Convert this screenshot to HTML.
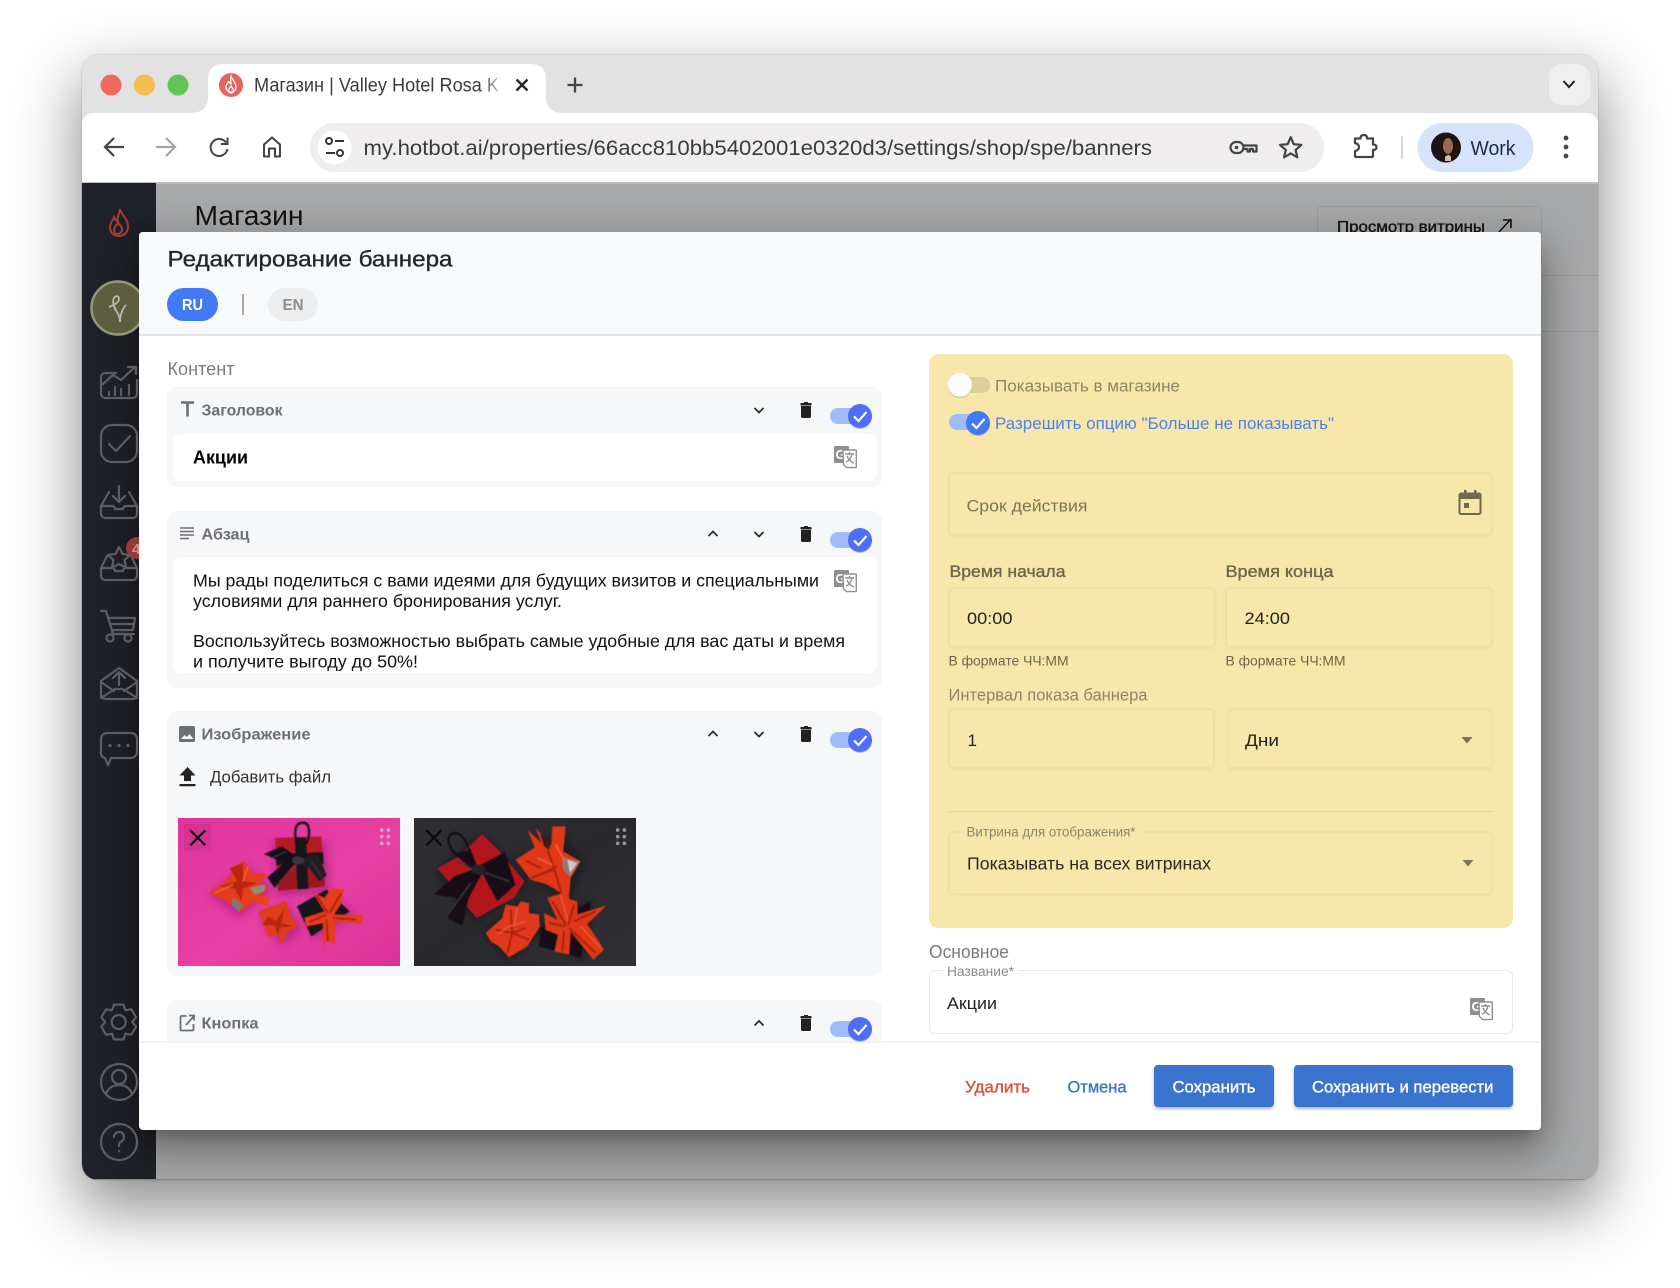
<!DOCTYPE html>
<html lang="ru"><head><meta charset="utf-8"><title>Магазин</title>
<style>
html,body{margin:0;padding:0;background:#fff;width:1680px;height:1288px;overflow:hidden}
body{position:relative;font-family:"Liberation Sans",sans-serif}
.a{position:absolute;box-sizing:border-box}
svg{position:absolute;left:0;top:0;overflow:visible}
svg text{font-family:"Liberation Sans",sans-serif}
.m{stroke-width:.35px;paint-order:stroke}
.in{border:2px solid #efe1a3;border-radius:6px;box-shadow:0 1px 2px rgba(120,100,30,.06)}
</style></head><body>

<!-- window -->
<div class="a" style="left:82px;top:55px;width:1516px;height:1125px;border-radius:16px;box-shadow:0 26px 62px 4px rgba(0,0,0,.44),0 0 1px 1px rgba(0,0,0,.08)"></div>
<div class="a" id="w" style="left:82px;top:55px;width:1516px;height:1125px;border-radius:16px;overflow:hidden;background:#e2e2e2">
  <div class="a" style="left:0;top:58px;width:1516px;height:69px;background:#fff;border-radius:11px 11px 0 0"></div>
  <div class="a" style="left:0;top:127px;width:1516px;height:998px;background:#a8a9aa;border-top:2px solid #bdbdbd"></div>
  <div class="a" style="left:0;top:128px;width:74px;height:997px;background:#202229"></div>
  <div class="a" style="left:74px;top:220px;width:1442px;height:1px;background:#9a9b9c"></div>
  <div class="a" style="left:74px;top:276px;width:1442px;height:1px;background:#9a9b9c"></div>
  <div class="a" style="left:0;top:1124px;width:1516px;height:1px;background:#8a8b8c"></div>
  <div class="a" style="left:1235px;top:151px;width:225px;height:60px;border:1px solid #9c9d9e;border-radius:4px"></div>
  <div class="a" style="left:57px;top:177px;width:1402px;height:898px;border-radius:4px;box-shadow:0 11px 15px -7px rgba(0,0,0,.25),0 24px 38px 3px rgba(0,0,0,.2),0 9px 46px 8px rgba(0,0,0,.17)"></div>
</div>

<!-- chrome + sidebar svg -->
<svg width="1680" height="1288" viewBox="0 0 1680 1288" fill="none">
  <circle cx="111" cy="85" r="10.5" fill="#ee6a5f"/><circle cx="144.500" cy="85" r="10.500" fill="#f5bd4f"/><circle cx="178" cy="85" r="10.500" fill="#61c454"/>
  <path d="M190 113Q208 113 208 97V80Q208 64 224 64H530Q546 64 546 80V97Q546 113 564 113Z" fill="#fff"/>
  <circle cx="231" cy="85" r="12" fill="#e8635a"/>
  <path d="M231 76c1 4 5 6 5 11a5 5 0 0 1-10 0c0-3 2-4 3-6 0 2 1 3 2 3 0-3-1-5 0-8zM231 93c-2 0-3-2-2-4l2-3 2 3c1 2 0 4-2 4z" stroke="#fff" stroke-width="1.300"/>
  <text x="254" y="91.500" font-size="19" fill="#3a3a3a" textLength="245" lengthAdjust="spacingAndGlyphs">Магазин | Valley Hotel Rosa K</text>
  <defs><linearGradient id="fd"><stop offset="0" stop-color="#fff" stop-opacity="0"/><stop offset="1" stop-color="#fff"/></linearGradient></defs>
  <rect x="482" y="70" width="24" height="30" fill="url(#fd)"/>
  <path d="M516.500 79.500l11 11M527.500 79.500l-11 11" stroke="#222" stroke-width="2.300"/>
  <path d="M575 77.500v15M567.500 85h15" stroke="#444" stroke-width="2.300"/>
  <rect x="1549" y="64" width="41" height="41" rx="13" fill="#efefef"/>
  <path d="M1563.500 81l5.500 6 5.500-6" stroke="#222" stroke-width="2"/>

  <!-- nav -->
  <path d="M124 147H106M114 138l-9 9 9 9" stroke="#444" stroke-width="2.200"/>
  <path d="M156 147H174M166 138l9 9-9 9" stroke="#a4a4a4" stroke-width="2.200"/>
  <path d="M226 142.500a8.500 8.500 0 1 0 1.500 6.500M227.500 137.500v6.500h-6.500" stroke="#444" stroke-width="2"/>
  <path d="M264 156.500v-12l8-7 8 7v12h-5v-8h-6v8z" stroke="#444" stroke-width="2" stroke-linejoin="round"/>
  <rect x="310" y="123" width="1014" height="49" rx="24.500" fill="#efedee"/>
  <circle cx="334.500" cy="147.500" r="17" fill="#fff"/>
  <g stroke="#333" stroke-width="2"><circle cx="329" cy="141" r="3"/><path d="M335 141h9M326 153h9"/><circle cx="340" cy="153" r="3"/></g>
  <text x="363.500" y="155" font-size="21.500" fill="#3b3b3b" textLength="788.500" lengthAdjust="spacingAndGlyphs">my.hotbot.ai/properties/66acc810bb5402001e0320d3/settings/shop/spe/banners</text>
  <g stroke="#444" stroke-width="2.200" stroke-linejoin="round"><rect x="1230.500" y="142" width="13" height="11" rx="5.500"/><path d="M1243 145.500h13.500v6h-3.500v-2.500h-3v2.500h-2.500v-2.500h-4"/></g><circle cx="1236.500" cy="147.500" r="1.800" fill="#444"/>
  <path d="M1290.700 137.200l3 7 7.700.7-5.800 5 1.700 7.400-6.600-3.900-6.600 3.900 1.700-7.400-5.800-5 7.700-.7z" stroke="#444" stroke-width="2.200" stroke-linejoin="round"/>
  <path d="M1355 138.500h5.500q0-3.500 3.300-3.500t3.300 3.500H1373v6q3.500 0 3.500 2.700t-3.500 2.700v6.100a1 1 0 0 1-1 1h-16a1 1 0 0 1-1-1v-5q4-1 4-4t-4-4z" stroke="#444" stroke-width="2.200" stroke-linejoin="round"/>
  <rect x="1401" y="136" width="2" height="23" fill="#d8d8d8"/>
  <rect x="1417.500" y="123" width="116" height="49" rx="24.500" fill="#d6e3fa"/>
  <circle cx="1446" cy="147.500" r="15" fill="#1c1412"/><ellipse cx="1448" cy="146" rx="5" ry="8" fill="#9a6c58"/><path d="M1445 157q4-4 6 0v4h-6z" fill="#d9b7a2"/>
  <text x="1470.500" y="155" font-size="20.500" fill="#1d2a4a" textLength="45" lengthAdjust="spacingAndGlyphs">Work</text>
  <g fill="#444"><circle cx="1566" cy="138" r="2.400"/><circle cx="1566" cy="147" r="2.400"/><circle cx="1566" cy="156" r="2.400"/></g>

  <!-- page behind -->
  <text x="194.500" y="225" font-size="28" fill="#111" textLength="109" lengthAdjust="spacingAndGlyphs">Магазин</text>
  <text x="1337" y="232" font-size="16" fill="#111" class="m" stroke="#111" textLength="148" lengthAdjust="spacingAndGlyphs">Просмотр витрины</text>
  <path d="M1499 232l12-13M1503 220h8v8" stroke="#111" stroke-width="1.600"/>

  <!-- sidebar -->
  <g stroke="#a63a34" stroke-width="2"><path d="M120 209c1 6 8 9 8 18 0 5-4 9-9 9-6 0-9-4-9-9 0-4 3-7 4-10 1 2 1 3 3 4 1-4 2-8 3-12z"/><path d="M118 222c1 3 5 5 4 9-1 2-3 3-4 3-3 0-4-2-4-4 0-3 3-5 4-8z"/></g>
  <circle cx="118" cy="308" r="26.500" fill="#5c5e3e" stroke="#95967e" stroke-width="2.500"/>
  <path d="M114 298c-2 3 0 10 3 14 2 3 3 7 3 10 0-6 2-13 6-17M114 298c2-3 5-2 5 1s-5 6-10 8M111 322h.1" stroke="#b9baa9" stroke-width="1.800"/>
  <circle cx="137" cy="548" r="11" fill="#973836"/>
  <text x="132" y="554" font-size="15" font-weight="700" fill="#c9908c">4</text>
  <g stroke="#5c5d62" stroke-width="2.200" stroke-linecap="round" stroke-linejoin="round">
    <path d="M116 373h-11a4 4 0 0 0-4 4v17a4 4 0 0 0 4 4h28a4 4 0 0 0 4-4v-14M103 384l10-9 8 5 14-13M128 367h8v7M109 395v-3M115 395v-8M121 395v-6M129 395v-10"/>
    <rect x="101" y="425" width="36" height="37" rx="11"/><path d="M109 444l7 7 14-15"/>
    <path d="M119 486v16M113 496l6 6 6-6M109 492l-8 14v8a4 4 0 0 0 4 4h28a4 4 0 0 0 4-4v-8l-8-14M101 506h11a3 3 0 0 1 3 3h8a3 3 0 0 1 3-3h11"/>
    <path d="M119 547l3.500 7 7.500 1-5.500 5 1.500 7.500-7-3.500-7 3.500 1.500-7.500-5.500-5 7.500-1zM107 556l-6 12v8a4 4 0 0 0 4 4h28a4 4 0 0 0 4-4v-8l-6-12M101 568h11a3 3 0 0 1 3 3h8a3 3 0 0 1 3-3h11"/>
    <path d="M101 611h5l7 23h21M109 618h26l-2 12h-21M111 624h23"/><circle cx="110" cy="638" r="3.500"/><circle cx="128" cy="638" r="3.500"/>
    <path d="M101 684v11a4 4 0 0 0 4 4h28a4 4 0 0 0 4-4v-14l-18-13-18 13zM101 682l13 9M137 682l-13 9M101 698l14-9h8l14 9M119 685v-12M113 678l6-6 6 6"/>
    <path d="M107 733h24a6 6 0 0 1 6 6v13a6 6 0 0 1-6 6h-20l-3 7-3-7a5 5 0 0 1-4-6v-13a6 6 0 0 1 6-6z"/>
    <path d="M110 745.500h.1M119 745.500h.1M128 745.500h.1" stroke-width="3.200"/>
    <path transform="translate(118.700 1022)" d="M-4.700-17.400L4.700-17.400 6.750-11.700 12.700-12.700 17.400-4.700 13.500 0 17.400 4.700 12.700 12.700 6.750 11.700 4.700 17.400-4.700 17.400-6.750 11.700-12.700 12.700-17.400 4.700-13.500 0-17.400-4.700-12.700-12.700-6.750-11.700Z"/>
    <circle cx="118.700" cy="1022" r="7"/>
    <circle cx="119" cy="1082" r="18"/><circle cx="119" cy="1077" r="7"/><path d="M106 1094c2-6 7-9 13-9s11 3 13 9"/>
    <circle cx="119" cy="1142" r="18"/><path d="M114 1137a5 5 0 1 1 8 4c-2 1-3 2-3 5"/><path d="M119 1151v.1"/>
  </g>
</svg>

<!-- modal -->
<div class="a" style="left:139px;top:232px;width:1402px;height:898px;border-radius:4px;background:#fff;overflow:hidden">
  <div class="a" style="left:0;top:0;width:1402px;height:104px;background:#f8f9fb;border-bottom:2px solid #e4e5e6"></div>
</div>
<div class="a" style="left:167px;top:288px;width:51px;height:33px;border-radius:17px;background:#4279f4"></div>
<div class="a" style="left:242px;top:294px;width:1.500px;height:21px;background:#a8a8a8"></div>
<div class="a" style="left:268px;top:288px;width:50px;height:33px;border-radius:17px;background:#ecedee"></div>

<!-- cards -->
<div class="a" style="left:167px;top:387px;width:715px;height:100px;border-radius:10px;background:#f6f7f9"></div>
<div class="a" style="left:173px;top:434px;width:704px;height:47px;border-radius:8px;background:#fff"></div>
<div class="a" style="left:167px;top:511px;width:715px;height:177px;border-radius:10px;background:#f6f7f9"></div>
<div class="a" style="left:173px;top:557px;width:704px;height:116px;border-radius:8px;background:#fff"></div>
<div class="a" style="left:167px;top:711px;width:715px;height:265px;border-radius:10px;background:#f6f7f9"></div>
<div class="a" style="left:167px;top:1000px;width:715px;height:42px;border-radius:10px 10px 0 0;background:#f6f7f9"></div>

<!-- yellow panel -->
<div class="a" style="left:929px;top:354px;width:584px;height:574px;border-radius:10px;background:#f7e7ab"></div>
<div class="a in" style="left:948px;top:472px;width:545px;height:64px"></div>
<div class="a in" style="left:948px;top:587px;width:268px;height:61px"></div>
<div class="a in" style="left:1225px;top:587px;width:268px;height:61px"></div>
<div class="a in" style="left:948px;top:708px;width:267px;height:61px"></div>
<div class="a in" style="left:1227px;top:708px;width:266px;height:61px"></div>
<div class="a" style="left:948px;top:811px;width:545px;height:1px;background:#e6d79d"></div>
<div class="a in" style="left:948px;top:831px;width:545px;height:64px"></div>
<div class="a" style="left:961px;top:829px;width:180px;height:5px;background:#f7e7ab"></div>
<div class="a" style="left:929px;top:970px;width:584px;height:64px;border:1.500px solid #e8e8e8;border-radius:6px;background:#fff"></div>
<div class="a" style="left:943px;top:968px;width:75px;height:5px;background:#fff"></div>
<div class="a" style="left:139px;top:1041px;width:1402px;height:2px;background:#f3f3f3"></div>

<svg width="1680" height="1288" viewBox="0 0 1680 1288" fill="none">
  <defs>
    <linearGradient id="pk" x1="0" y1="0" x2="1" y2="1"><stop offset="0" stop-color="#e2339e"/><stop offset=".55" stop-color="#e540a3"/><stop offset="1" stop-color="#dc3196"/></linearGradient>
    <linearGradient id="dk" x1="0" y1="0" x2="1" y2="1"><stop offset="0" stop-color="#2f2f33"/><stop offset=".5" stop-color="#29292d"/><stop offset="1" stop-color="#303035"/></linearGradient>
    <filter id="b1" x="-10%" y="-10%" width="120%" height="120%"><feGaussianBlur stdDeviation="1.800"/></filter>
    <filter id="b2" x="-30%" y="-30%" width="160%" height="160%"><feGaussianBlur stdDeviation="12"/></filter>
    <clipPath id="ic"><rect width="666" height="444"/></clipPath>
    <symbol id="on" viewBox="0 0 44 26" width="44" height="26" overflow="visible">
      <rect x="0" y="5" width="40" height="16" rx="8" fill="#9fbcf9"/><circle cx="30" cy="13" r="12" fill="#000" opacity=".2" transform="translate(0 1)"/><circle cx="30" cy="13" r="12" fill="#4f6ef5"/><path d="M24 13.500l4.500 4.500 8-9" stroke="#fff" stroke-width="2.200"/>
    </symbol>
    <symbol id="tr" viewBox="0 0 14 16" width="14" height="16"><path d="M1.500 1h11v2.500a0 0 0 0 1 0 0H1.500z" fill="#222"/><path d="M5 0h4v1.500H5z" fill="#222"/><path d="M2 4h10v10.500a1.500 1.500 0 0 1-1.500 1.500h-7A1.500 1.500 0 0 1 2 14.500z" fill="#222"/></symbol>
  </defs>

  <text x="167.500" y="266.500" font-size="22" fill="#23262b" stroke="#23262b" class="m" textLength="285" lengthAdjust="spacingAndGlyphs">Редактирование баннера</text>
  <text x="182" y="310" font-size="15.500" font-weight="700" fill="#fff" textLength="21" lengthAdjust="spacingAndGlyphs">RU</text>
  <text x="282.500" y="310" font-size="15.500" font-weight="700" fill="#8d8d8d" textLength="21" lengthAdjust="spacingAndGlyphs">EN</text>
  <text x="167.500" y="375" font-size="18" fill="#7b7b7b" textLength="67" lengthAdjust="spacingAndGlyphs">Контент</text>

  <!-- card labels -->
  <g font-weight="700" font-size="16" fill="#6e6f71">
    <text x="201.500" y="415.500" textLength="81" lengthAdjust="spacingAndGlyphs">Заголовок</text>
    <text x="201.500" y="539.500" textLength="48" lengthAdjust="spacingAndGlyphs">Абзац</text>
    <text x="201.500" y="739.500" textLength="109" lengthAdjust="spacingAndGlyphs">Изображение</text>
    <text x="201.500" y="1028.500" textLength="57" lengthAdjust="spacingAndGlyphs">Кнопка</text>
  </g>
  <path d="M181 402.500h13M187.500 402.500v14" stroke="#6e6f71" stroke-width="2.600"/>
  <path d="M180 528h14M180 531.500h14M180 535h14M180 538.500h9" stroke="#6e6f71" stroke-width="1.500"/>
  <rect x="179" y="726" width="16" height="16" rx="1.800" fill="#6e6f71"/><path d="M181 739l3.500-4 2.500 2 2.500-3 4 5z" fill="#f6f7f9"/>
  <path d="M181 1016h5.500M193.500 1024v5.500a1 1 0 0 1-1 1h-11a1 1 0 0 1-1-1v-12.500a1 1 0 0 1 1-1M186 1025l8-9M189 1015.500h5v5" stroke="#6e6f71" stroke-width="1.800"/>

  <text x="193" y="463.500" font-size="18" font-weight="700" fill="#000" textLength="55" lengthAdjust="spacingAndGlyphs">Акции</text>
  <g font-size="17.500" fill="#111">
    <text x="193" y="586.500" textLength="626" lengthAdjust="spacingAndGlyphs">Мы рады поделиться с вами идеями для будущих визитов и специальными</text>
    <text x="193" y="607" textLength="369" lengthAdjust="spacingAndGlyphs">условиями для раннего бронирования услуг.</text>
    <text x="193" y="647" textLength="652" lengthAdjust="spacingAndGlyphs">Воспользуйтесь возможностью выбрать самые удобные для вас даты и время</text>
    <text x="193" y="667.500" textLength="225" lengthAdjust="spacingAndGlyphs">и получите выгоду до 50%!</text>
  </g>

  <!-- chevrons -->
  <g stroke="#2c2c2c" stroke-width="1.800">
    <path d="M754.500 408l4.500 4.500 4.500-4.500M754.500 532l4.500 4.500 4.500-4.500M754.500 732l4.500 4.500 4.500-4.500"/>
    <path d="M708.500 536l4.500-4.500 4.500 4.500M708.500 736l4.500-4.500 4.500 4.500M754.500 1025.500l4.500-4.500 4.500 4.500"/>
  </g>
  <use href="#tr" x="799" y="402"/><use href="#tr" x="799" y="526"/><use href="#tr" x="799" y="726"/><use href="#tr" x="799" y="1015"/>
  <use href="#on" x="830" y="403"/><use href="#on" x="830" y="527"/><use href="#on" x="830" y="727"/><use href="#on" x="830" y="1016"/>

  <!-- translate icons -->
  <g transform="translate(-1 0)"><rect x="835" y="446" width="15" height="17" rx="1" fill="#8f8f8f"/><text x="836.500" y="459" font-size="13" font-weight="700" fill="#fff">G</text><path d="M844 450h12.500a.8.800 0 0 1 .8.800v16a.8.800 0 0 1-.8.800h-9l-3-3z" fill="#fff" stroke="#8f8f8f" stroke-width="1.400"/><path d="M846 454h9M850.500 452v2M853 454c-1 4-3 7-6 8M848 456c1 3 4 6 7 7" stroke="#8f8f8f" stroke-width="1.400"/></g>
  <g transform="translate(-1 0)"><rect x="835" y="570" width="15" height="17" rx="1" fill="#8f8f8f"/><text x="836.500" y="583" font-size="13" font-weight="700" fill="#fff">G</text><path d="M844 574h12.500a.8.800 0 0 1 .8.800v16a.8.800 0 0 1-.8.800h-9l-3-3z" fill="#fff" stroke="#8f8f8f" stroke-width="1.400"/><path d="M846 578h9M850.500 576v2M853 578c-1 4-3 7-6 8M848 580c1 3 4 6 7 7" stroke="#8f8f8f" stroke-width="1.400"/></g>
  <g transform="translate(-1 0)"><rect x="1471" y="998" width="15" height="17" rx="1" fill="#8f8f8f"/><text x="1472.500" y="1011" font-size="13" font-weight="700" fill="#fff">G</text><path d="M1480 1002h12.500a.8.800 0 0 1 .8.800v16a.8.800 0 0 1-.8.800h-9l-3-3z" fill="#fff" stroke="#8f8f8f" stroke-width="1.400"/><path d="M1482 1006h9M1486.500 1004v2M1489 1006c-1 4-3 7-6 8M1484 1008c1 3 4 6 7 7" stroke="#8f8f8f" stroke-width="1.400"/></g>

  <!-- upload -->
  <path d="M187.500 767l-8 8.500h4.500v5.500h7v-5.500h4.500zM179.500 784h16v2.200h-16z" fill="#222"/>
  <text x="210" y="782.500" font-size="17" fill="#333" textLength="121" lengthAdjust="spacingAndGlyphs">Добавить файл</text>

  <!-- image 1 (drawn at 3x local coords) -->
  <g transform="translate(178 818) scale(.33333)" clip-path="url(#ic)">
    <rect width="666" height="444" fill="url(#pk)"/>
    <g fill="#a3157a" opacity=".55" filter="url(#b2)">
      <path d="M280 70L445 70 455 225 300 235Z"/>
      <path d="M95 235L200 140 285 215 185 300Z"/>
      <path d="M245 290L335 260 370 340 310 385Z"/>
      <path d="M365 275L450 225 530 290 405 365Z"/>
    </g>
    <g filter="url(#b1)" stroke-linejoin="round">
      <!-- red box + black bow -->
      <path d="M292 60L430 55 440 205 300 218Z" fill="#b01a22"/>
      <path d="M300 160L440 150 440 205 300 218Z" fill="#9c141c"/>
      <path d="M292 108L435 102 437 138 296 142Z" fill="#17131a"/>
      <path d="M350 58L384 58 392 212 358 214Z" fill="#17131a"/>
      <path d="M358 82C345 40 352 14 374 14 396 14 398 44 386 78" stroke="#15111a" stroke-width="7"/>
      <path d="M258 108L312 84 365 122 330 160 290 210 268 178 318 135Z" fill="#15111a"/>
      <path d="M372 118L420 110 446 172 424 190 392 150 368 138Z" fill="#211c25"/>
      <path d="M345 118C360 112 375 118 380 128 370 142 352 142 342 132Z" fill="#3a3640"/>
      <path d="M280 120L325 100M352 150L305 190M400 130L430 175" stroke="#3d3945" stroke-width="3"/>
      <!-- left orange gift -->
      <path d="M92 225L140 190 195 128 225 165 270 167 245 198 272 205 262 222 185 285 160 258 128 240Z" fill="#e33c1b"/>
      <path d="M165 240L196 262 182 280 162 262Z" fill="#7a7d72"/>
      <path d="M215 210L262 200 260 218 232 230Z" fill="#8b8d80"/>
      <path d="M195 225L275 238 270 266 218 248Z" fill="#e8431f"/>
      <path d="M155 150L178 190 125 205 170 212 190 250 195 210 240 195 195 190 195 135Z" fill="#b9270f"/>
      <path d="M110 225L165 200M210 145L195 190" stroke="#f4643b" stroke-width="4"/>
      <!-- small gift -->
      <path d="M240 280L325 248 337 290 360 325 333 338 310 380 300 350 270 358 258 318Z" fill="#e03a1c"/>
      <path d="M270 295L295 310 320 270 310 315 345 325 305 330 300 355 290 322 252 322Z" fill="#b8280f"/>
      <!-- black box + bow -->
      <path d="M357 265L445 215 515 280 400 355Z" fill="#16131a"/>
      <path d="M405 225L440 240 460 210 497 215 490 255 468 290 557 292 550 318 470 310 472 378 445 368 437 388 435 315 385 325 380 300 440 280Z" fill="#e33c1b"/>
      <path d="M415 232L450 285M490 225L455 285M465 300L535 305M445 305L450 370M395 312L445 290" stroke="#b0240e" stroke-width="6"/>
    </g>
    <rect x="18" y="18" width="82" height="82" fill="#000" opacity=".06"/>
    <path d="M37 37L82 82M82 37L37 82" stroke="#141216" stroke-width="7"/>
    <g fill="#dfa0ca"><circle cx="611" cy="36" r="5.500"/><circle cx="631" cy="36" r="5.500"/><circle cx="611" cy="56" r="5.500"/><circle cx="631" cy="56" r="5.500"/><circle cx="611" cy="76" r="5.500"/><circle cx="631" cy="76" r="5.500"/></g>
  </g>

  <!-- image 2 -->
  <g transform="translate(414 818) scale(.33333)" clip-path="url(#ic)">
    <rect width="666" height="444" fill="url(#dk)"/>
    <g fill="#111114" opacity=".6" filter="url(#b2)">
      <path d="M70 160L205 55 335 195 190 305Z"/><path d="M305 130L450 60 500 140 460 245Z"/><path d="M215 345L320 255 385 325 285 425Z"/><path d="M375 335L530 250 505 425Z"/>
    </g>
    <g filter="url(#b1)" stroke-linejoin="round">
      <!-- red/black gift -->
      <path d="M70 150L130 118 205 48 252 95 332 190 300 240 250 265 190 300 170 280 125 215Z" fill="#b2191f"/>
      <path d="M170 105C150 50 130 38 112 48 98 58 100 85 128 112" stroke="#111014" stroke-width="6.500"/>
      <path d="M120 108L170 92 190 145 272 102 305 200 282 222 250 250 225 205 205 165 165 240 145 322 100 300 130 240 60 230 120 175 175 155Z" fill="#121115"/>
      <path d="M105 285L170 195M200 160L285 190M130 130L180 155" stroke="#34333a" stroke-width="5"/>
      <path d="M180 140C200 135 218 148 215 165 200 178 178 170 172 155Z" fill="#25242a"/>
      <!-- top right orange -->
      <path d="M305 125L362 88 340 35 382 75 365 30 412 82 415 25 455 25 448 100 500 130 470 180 465 240 400 200 350 185Z" fill="#df3818"/>
      <path d="M378 48L415 65 405 95 390 85Z" fill="#3a1a1c"/>
      <path d="M445 118L497 130 470 175 448 155Z" fill="#8c7a78"/>
      <path d="M460 125L490 135 468 165Z" fill="#d9c4c0"/>
      <path d="M335 128L380 150M400 95L420 150 445 235M380 170L430 145M350 180L420 155" stroke="#a9230e" stroke-width="6"/>
      <path d="M425 80L450 125M370 120L415 140" stroke="#f4603a" stroke-width="5"/>
      <!-- bottom center orange -->
      <path d="M215 345L265 300 275 260 310 265 320 250 345 255 345 285 375 290 378 325 340 385 285 418 255 385 230 370Z" fill="#e0391a"/>
      <path d="M245 335L295 345 280 405M295 345L335 330M295 345L290 275M295 345L345 365" stroke="#ad240f" stroke-width="6"/>
      <path d="M250 350L285 325 335 310M310 270L300 325" stroke="#f2593a" stroke-width="4"/>
      <!-- bottom right -->
      <path d="M380 330L530 250 525 300 500 418 375 385Z" fill="#121115"/>
      <path d="M400 240L445 225 470 245 490 250 490 290 578 262 520 318 570 395 538 425 470 340 465 410 422 400 432 350 395 335 390 285 430 305Z" fill="#df3719"/>
      <path d="M415 250L455 320M480 260L462 322M465 330L545 405M450 340L445 400M405 315L455 325M480 310L545 280" stroke="#a6200d" stroke-width="6"/>
      <path d="M440 232L462 310M500 325L560 390" stroke="#f25a35" stroke-width="4"/>
    </g>
    <path d="M37 37L82 82M82 37L37 82" stroke="#0b0b0d" stroke-width="7"/>
    <g fill="#96969a"><circle cx="611" cy="36" r="5.500"/><circle cx="631" cy="36" r="5.500"/><circle cx="611" cy="56" r="5.500"/><circle cx="631" cy="56" r="5.500"/><circle cx="611" cy="76" r="5.500"/><circle cx="631" cy="76" r="5.500"/></g>
  </g>

  <!-- yellow panel contents -->
  <rect x="949" y="377" width="41" height="16" rx="8" fill="#dccf98"/>
  <circle cx="960" cy="386" r="12" fill="#000" opacity=".18"/><circle cx="960" cy="385" r="12" fill="#fbfbfb"/>
  <text x="995" y="391.500" font-size="17" fill="#8d8664" textLength="185" lengthAdjust="spacingAndGlyphs">Показывать в магазине</text>
  <rect x="949" y="414" width="41" height="16" rx="8" fill="#9fbcf9"/>
  <circle cx="978" cy="424" r="12" fill="#000" opacity=".2"/><circle cx="978" cy="423" r="12" fill="#4279f4"/><path d="M972 423.500l4.500 4.500 8-9" stroke="#fff" stroke-width="2.200"/>
  <text x="995" y="429" font-size="17" fill="#4b82ee" textLength="339" lengthAdjust="spacingAndGlyphs">Разрешить опцию "Больше не показывать"</text>
  <text x="966.500" y="511.500" font-size="17" fill="#7c7552" textLength="121" lengthAdjust="spacingAndGlyphs">Срок действия</text>
  <path d="M1461 493.500h18a1.500 1.500 0 0 1 1.500 1.500v17.500a1.500 1.500 0 0 1-1.500 1.500h-18a1.500 1.500 0 0 1-1.500-1.500V495a1.500 1.500 0 0 1 1.500-1.500z" stroke="#6f6a4c" stroke-width="2"/>
  <path d="M1460 493h20v6h-20zM1464 490h2.500v4H1464zM1474 490h2.500v4H1474zM1464 503h5v5h-5z" fill="#6f6a4c"/>
  <text x="949.500" y="577" font-size="17" fill="#6d664a" stroke="#6d664a" class="m" textLength="116" lengthAdjust="spacingAndGlyphs">Время начала</text>
  <text x="1225.500" y="577" font-size="17" fill="#6d664a" stroke="#6d664a" class="m" textLength="108" lengthAdjust="spacingAndGlyphs">Время конца</text>
  <text x="967" y="624" font-size="17" fill="#23221a" textLength="45.500" lengthAdjust="spacingAndGlyphs">00:00</text>
  <text x="1244.500" y="624" font-size="17" fill="#23221a" textLength="45.500" lengthAdjust="spacingAndGlyphs">24:00</text>
  <text x="948.500" y="665.500" font-size="13.500" fill="#6d664a" textLength="120" lengthAdjust="spacingAndGlyphs">В формате ЧЧ:ММ</text>
  <text x="1225.500" y="665.500" font-size="13.500" fill="#6d664a" textLength="120" lengthAdjust="spacingAndGlyphs">В формате ЧЧ:ММ</text>
  <text x="948.500" y="700.500" font-size="17" fill="#8d8664" textLength="199" lengthAdjust="spacingAndGlyphs">Интервал показа баннера</text>
  <text x="967.500" y="746" font-size="17" fill="#23221a">1</text>
  <text x="1245" y="746" font-size="17" fill="#23221a" textLength="34" lengthAdjust="spacingAndGlyphs">Дни</text>
  <path d="M1461.500 737h11l-5.500 6.500z" fill="#7c7552"/>
  <text x="966.500" y="836.500" font-size="13.500" fill="#8d8664" textLength="169" lengthAdjust="spacingAndGlyphs">Витрина для отображения*</text>
  <text x="967" y="869.500" font-size="17.500" fill="#2b2a1d" textLength="244" lengthAdjust="spacingAndGlyphs">Показывать на всех витринах</text>
  <path d="M1462.500 860h11l-5.500 6.500z" fill="#7c7552"/>

  <text x="929" y="958" font-size="18" fill="#7b7b7b" textLength="80" lengthAdjust="spacingAndGlyphs">Основное</text>
  <text x="947" y="976" font-size="13.500" fill="#8a8a8a" textLength="67" lengthAdjust="spacingAndGlyphs">Название*</text>
  <text x="947" y="1009" font-size="17" fill="#222" textLength="50" lengthAdjust="spacingAndGlyphs">Акции</text>
</svg>

<!-- footer -->
<div class="a" style="left:1154px;top:1065px;width:120px;height:42px;border-radius:4px;background:#3a74cf;box-shadow:0 2px 3px rgba(0,0,0,.3)"></div>
<div class="a" style="left:1293.500px;top:1065px;width:219px;height:42px;border-radius:4px;background:#3a74cf;box-shadow:0 2px 3px rgba(0,0,0,.3)"></div>
<svg width="1680" height="1288" viewBox="0 0 1680 1288" fill="none">
  <text x="965" y="1092.500" font-size="16.500" fill="#e5493a" stroke="#e5493a" class="m" textLength="65" lengthAdjust="spacingAndGlyphs">Удалить</text>
  <text x="1067.500" y="1092.500" font-size="16.500" fill="#3b73cc" stroke="#3b73cc" class="m" textLength="59" lengthAdjust="spacingAndGlyphs">Отмена</text>
  <text x="1172.500" y="1092.500" font-size="16.500" fill="#fff" stroke="#fff" class="m" textLength="83" lengthAdjust="spacingAndGlyphs">Сохранить</text>
  <text x="1312" y="1092.500" font-size="16.500" fill="#fff" stroke="#fff" class="m" textLength="181.500" lengthAdjust="spacingAndGlyphs">Сохранить и перевести</text>
</svg>
</body></html>
